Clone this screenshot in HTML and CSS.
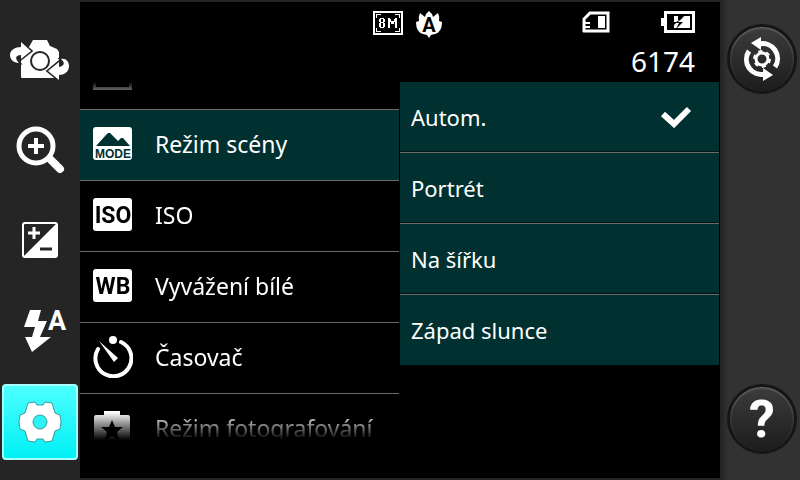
FILE: index.html
```
<!DOCTYPE html>
<html lang="cs">
<head>
  <meta charset="UTF-8">
  <meta name="viewport" content="width=device-width, initial-scale=1">
  <title>Nastavení fotoaparátu</title>
  <link rel="stylesheet" href="styles.css">
</head>
<body>
<div class="camera">

  <nav class="tools">
    <button class="tool" aria-label="Přepnout fotoaparát">
      <svg width="60" height="42" viewBox="0 0 60 42">
        <path fill="#fff" d="M23 1h14l3 6 7 3 2 3v25q0 1-1 1H12q-1 0-1-1V13q0-2 2-2l6-3z"/>
        <circle cx="30" cy="22" r="9" fill="#fff" stroke="#252525" stroke-width="2"/>
        <g class="swap-arrow">
          <path d="M11 3L21 12 11 20V16C5 16 5 20 9 24 3 24 0 20 0 16 0 11 5 8 11 8z"/>
          <path d="M49 41L38 32 49 23V28C55 27 55 23 51 20 56 19 59 23 59 27 59 33 54 36 49 36z"/>
        </g>
      </svg>
    </button>
    <button class="tool" aria-label="Lupa">
      <svg width="50" height="50" viewBox="0 0 50 50" fill="none" stroke="#fff">
        <circle cx="21" cy="21" r="17" stroke-width="5"/>
        <path stroke-width="4" d="M21 13v16M13 21h16"/>
        <path stroke-width="8" stroke-linecap="round" d="M36 35l9 9"/>
      </svg>
    </button>
    <button class="tool" aria-label="Jas">
      <svg width="36" height="36" viewBox="0 0 36 36">
        <rect x="1" y="1" width="34" height="34" rx="2" fill="none" stroke="#fff" stroke-width="2"/>
        <path fill="#fff" d="M35 1v34H1z"/>
        <path stroke="#fff" stroke-width="3" d="M12 5v12M6 11h12"/>
        <path stroke="#252525" stroke-width="3" d="M18 27h12"/>
      </svg>
    </button>
    <button class="tool" aria-label="Blesk automaticky">
      <svg width="56" height="48" viewBox="-2 -4 56 48">
        <path fill="#fff" d="M16 0h11l-3 11h9l-7 16h11L18 42 11 27h7l3-10H10z"/>
        <text class="flash-letter" x="34" y="20">A</text>
      </svg>
    </button>
    <button class="tool tool-active" aria-label="Nastavení">
      <svg width="44" height="44" viewBox="-22 -22 44 44">
        <path fill="#fff" stroke="#3c9a9c" stroke-width="1" d="M-12-19L-5-20-3-17H3L5-20 12-19 15-9 20-7Q22 0 20 7L15 9 12 19 5 20 3 17H-3L-5 20-12 19-15 9-20 7Q-22 0-20-7L-15-9z"/>
        <circle r="7" fill="#2df1f2" stroke="#3c9a9c"/>
      </svg>
    </button>
  </nav>

  <main class="screen">
    <header class="status">
      <div class="status-left">
        <svg width="30" height="24" viewBox="0 0 30 24" shape-rendering="crispEdges">
          <path fill="none" stroke="#fff" stroke-width="2" d="M1 1h28v22H1z"/>
          <path fill="#fff" d="M3 3h5v1H4v3H3zM27 3h-5v1h4v3h1zM3 21h5v-1H4v-3H3zM27 21h-5v-1h4v-3h1z"/>
          <path fill="#fff" d="M7 7h4v1H7zM6 8h2v3H6zM10 8h2v3h-2zM7 11h4v1H7zM6 12h2v4H6zM10 12h2v4h-2zM7 16h4v1H7z"/>
          <path fill="#fff" d="M15 7h2v10h-2zM22 7h2v10h-2zM17 8h1v3h-1zM21 8h1v3h-1zM18 10h3v3h-3z"/>
        </svg>
        <svg width="26" height="27" viewBox="0 0 26 27">
          <path fill="#fff" d="M13 0q3 2 4 6l5-4q2 4 1 8l3 1q0 10-7 12l-4 1-2 3-2-3-4-1Q0 21 0 11l3-1Q2 6 4 2l5 4q1-4 4-6z"/>
          <text class="tulip-letter" x="13" y="21" text-anchor="middle">A</text>
        </svg>
      </div>
      <div class="status-right">
        <div class="indicators">
          <svg width="28" height="22" viewBox="0 0 28 22" fill="none" stroke="#fff">
            <path stroke-width="3" d="M2 21V8l6-6h18v18H1"/>
            <path fill="#fff" stroke="none" d="M16 5h7v12h-7zM2 11h6v2H2zM2 15h6v2H2z"/>
          </svg>
          <svg width="34" height="22" viewBox="0 0 34 22">
            <path fill="none" stroke="#fff" stroke-width="3" d="M4.500 1.500h28v19h-28z"/>
            <path fill="#fff" d="M0 7h4v8H0zM13 5h4v4h2l4-4h6v12H13v-3l3-3h-3z"/>
            <path fill="#000" d="M25 4l-7 6-1 1h5l-7 7 3-6h-4z"/>
          </svg>
        </div>
        <span class="counter">6174</span>
      </div>
    </header>

    <div class="panels">
      <div class="menu">
        <button class="row row-cut" aria-label="Předchozí položka">
          <svg width="40" height="34" viewBox="0 0 40 34"><path fill="none" stroke="#fff" stroke-width="3" d="M1.500 1.500h36v31h-36z"/></svg>
        </button>
        <button class="row row-selected">
          <svg width="40" height="34" viewBox="0 0 40 34">
            <rect width="39" height="33" rx="3" fill="#fff"/>
            <path fill="#003030" d="M3 19L13 8l2-2h2l8 8 3-3h2l7 8z"/>
            <text class="icon-mode" x="20" y="31" text-anchor="middle">MODE</text>
          </svg>
          <span>Režim scény</span>
        </button>
        <button class="row">
          <svg width="40" height="34" viewBox="0 0 40 34">
            <rect width="39" height="33" rx="3" fill="#fff"/>
            <text class="icon-text" x="20" y="25" text-anchor="middle">ISO</text>
          </svg>
          <span>ISO</span>
        </button>
        <button class="row">
          <svg width="40" height="34" viewBox="0 0 40 34">
            <rect width="39" height="33" rx="3" fill="#fff"/>
            <text class="icon-text" x="20" y="25" text-anchor="middle">WB</text>
          </svg>
          <span>Vyvážení bílé</span>
        </button>
        <button class="row">
          <svg width="40" height="42" viewBox="0 0 40 42">
            <path fill="none" stroke="#fff" stroke-width="4" stroke-linecap="round" d="M28 6A18 18 0 1 1 5 13"/>
            <circle cx="20" cy="4" r="4" fill="#fff"/>
            <path fill="#fff" d="M6 5l19 17-4 4z"/>
          </svg>
          <span>Časovač</span>
        </button>
        <button class="row">
          <svg width="40" height="34" viewBox="0 0 40 34">
            <path fill="#fff" d="M11 0h16v4h8q2 0 2 2v26H1V6q0-2 2-2h8z"/>
            <path fill="#000" d="M19 9l3 7h8l-6 5 2 8-7-4-7 4 2-8-6-5h8z"/>
          </svg>
          <span>Režim fotografování</span>
        </button>
      </div>

      <div class="options">
        <button class="option">
          <span>Autom.</span>
          <svg width="32" height="22" viewBox="0 0 32 22"><path fill="none" stroke="#fff" stroke-width="6" d="M3 8l11 10L29 3"/></svg>
        </button>
        <button class="option">Portrét</button>
        <button class="option">Na šířku</button>
        <button class="option">Západ slunce</button>
      </div>
    </div>
  </main>

  <aside class="side">
    <button class="round" aria-label="Obnovit nastavení">
      <svg width="46" height="46" viewBox="-23 -23 46 46">
        <g id="arrow">
          <path fill="none" stroke="#fff" stroke-width="5" d="M-3-15A15 15 0 0 1 13 8"/>
          <path fill="#fff" d="M-11-16L-1-22V-9z"/>
        </g>
        <use href="#arrow" transform="rotate(180)"/>
        <circle r="6" fill="none" stroke="#fff" stroke-width="3"/>
        <circle r="8" fill="none" stroke="#fff" stroke-width="2" stroke-dasharray="4.200 4.200"/>
      </svg>
    </button>
    <button class="round help" aria-label="Nápověda">?</button>
  </aside>

</div>
</body>
</html>
```

FILE: styles.css
```
body {
  margin: 0;
  background: #000;
  color: #fff;
  font-family: "Noto Sans", "Open Sans", sans-serif;
}

button {
  margin: 0;
  padding: 0;
  border: none;
  background: none;
  color: inherit;
  font: inherit;
  cursor: pointer;
}

svg {
  display: block;
  flex: none;
}

.camera {
  display: grid;
  grid-template-columns: 80px 1fr 80px;
  min-height: 100vh;
}

/* left toolbar */
.tools {
  display: flex;
  flex-direction: column;
  align-items: center;
  padding: 15px 2px;
  background: #252525;
}

.tool {
  display: flex;
  align-items: center;
  justify-content: center;
  width: 76px;
  height: 90px;
}

.tool-active {
  height: 76px;
  margin-top: 9px;
  box-sizing: border-box;
  border: 2px solid #a8ffff;
  border-radius: 4px;
  background: linear-gradient(#4dffff, #00f0f5);
}

.swap-arrow {
  fill: #fff;
  stroke: #252525;
  stroke-width: 3px;
  paint-order: stroke;
}

.flash-letter,
.tulip-letter {
  font-family: Roboto, sans-serif;
  font-weight: bold;
}

.flash-letter {
  font-size: 27px;
  fill: #fff;
}

.tulip-letter {
  font-size: 20px;
}

/* screen */
.screen {
  display: flex;
  flex-direction: column;
  border-top: 2px solid #252525;
  border-bottom: 2px solid #252525;
  background: #000;
}

.status {
  display: flex;
  justify-content: space-between;
  height: 80px;
  box-sizing: border-box;
  padding: 9px 25px 0 293px;
}

.status-left,
.indicators {
  display: flex;
}

.status-left {
  gap: 13px;
}

.status-right {
  display: flex;
  flex-direction: column;
  align-items: flex-end;
}

.indicators {
  gap: 51px;
}

.counter {
  font-size: 28px;
  line-height: 38px;
  margin-top: 9px;
}

.panels {
  display: grid;
  grid-template-columns: 1fr 1fr;
  align-items: start;
}

.menu {
  height: 358px;
  margin-right: 1px;
  overflow: hidden;
  -webkit-mask-image: linear-gradient(transparent, #000 20px, #000 330px, transparent);
  mask-image: linear-gradient(transparent, #000 20px, #000 330px, transparent);
}

.row {
  display: flex;
  align-items: center;
  gap: 22px;
  width: 100%;
  height: 71px;
  box-sizing: border-box;
  padding: 0 13px 2px;
  border-top: 1px solid #6b6b6b;
  font-size: 23px;
  white-space: nowrap;
}

.row-cut {
  margin-top: -44px;
}

.row-selected {
  background: #003030;
}

.icon-mode {
  font-family: "Liberation Sans", sans-serif;
  font-size: 12px;
  font-weight: bold;
  fill: #003030;
}

.icon-text {
  font-family: Roboto, sans-serif;
  font-size: 23px;
  font-weight: bold;
}

.options {
  margin-right: 1px;
  background: #003030;
}

.option {
  display: flex;
  align-items: center;
  justify-content: space-between;
  width: 100%;
  height: 71px;
  box-sizing: border-box;
  padding: 0 27px 0 11px;
  border-bottom: 1px solid #6b6b6b;
  box-shadow: inset 0 -1px #001414;
  font-size: 22px;
}

.option:last-child {
  height: 70px;
  border-bottom: none;
  box-shadow: none;
}

/* right column */
.side {
  display: flex;
  flex-direction: column;
  align-items: center;
  justify-content: space-between;
  padding: 24px 0 26px 4px;
  background: linear-gradient(90deg, #222, #323232 8px);
}

.round {
  display: flex;
  align-items: center;
  justify-content: center;
  width: 70px;
  height: 70px;
  box-sizing: border-box;
  border: 3px solid #161616;
  border-radius: 50%;
  background: linear-gradient(#3c3c3c, #1c1c1c);
  box-shadow: inset 0 1px 2px #777;
}

.help {
  font-family: Roboto, sans-serif;
  font-size: 52px;
  font-weight: bold;
}
```
